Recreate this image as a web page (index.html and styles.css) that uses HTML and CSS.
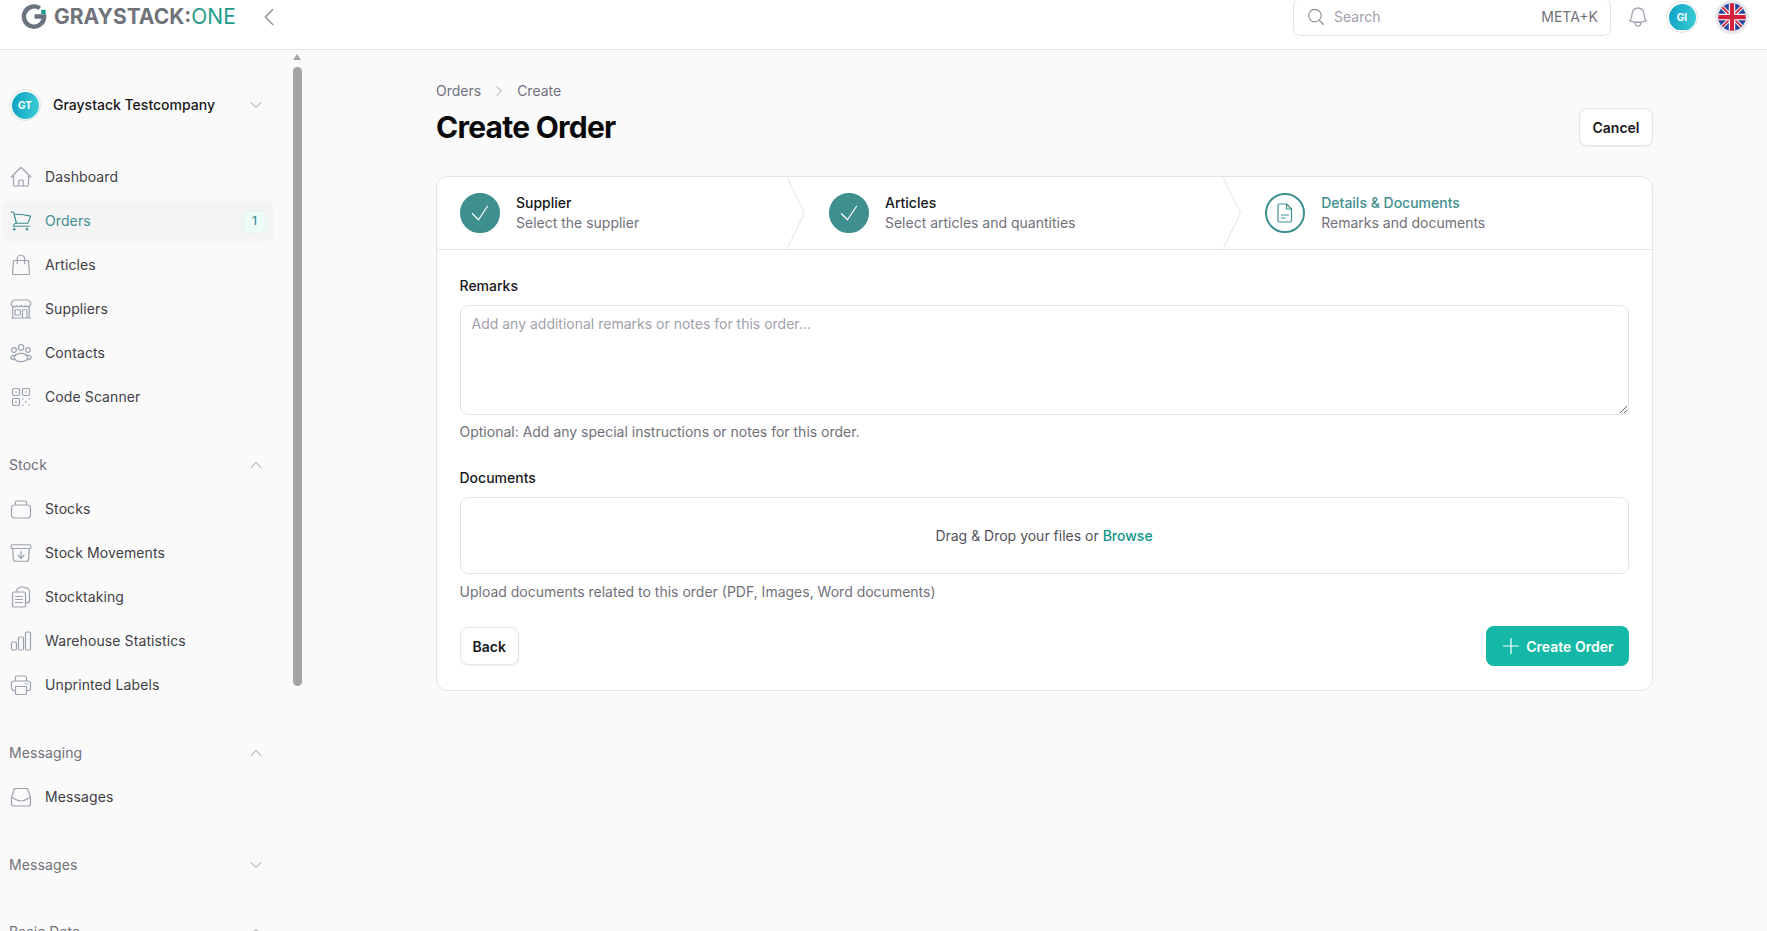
FILE: index.html
```html
<!DOCTYPE html>
<html lang="en">
<head>
    <meta charset="UTF-8">
    <meta name="viewport" content="width=device-width, initial-scale=1.0">
    <title>Create Order</title>
    <link rel="stylesheet" href="styles.css">
</head>
<body>
    <header class="topbar">
        <div class="brand">
            <svg class="brand-mark" viewBox="0 0 28 28"><path d="M19.5 5.400A10.500 10.500 0 1 0 24 14H14" fill="none" stroke="#6b7280" stroke-width="4.6"/><rect x="21" y="7" width="4.500" height="4.500" fill="#1a9c8c" stroke="none"/></svg>
            <span class="brand-name">GRAYSTACK:<span class="brand-one">ONE</span></span>
        </div>
        <svg class="collapse" viewBox="0 0 24 24"><path d="M15.75 19.5 8.25 12l7.5-7.5"/></svg>
        <div class="topbar-right">
            <div class="search">
                <svg viewBox="0 0 24 24"><path d="m21 21-5.2-5.2m0 0A7.5 7.5 0 1 0 5.2 5.2a7.5 7.5 0 0 0 10.6 10.6Z"/></svg>
                <span class="search-text">Search</span>
                <span class="search-key">META+K</span>
            </div>
            <svg class="bell" viewBox="0 0 24 24"><path d="M14.857 17.082a23.848 23.848 0 0 0 5.454-1.31A8.967 8.967 0 0 1 18 9.75V9A6 6 0 0 0 6 9v.75a8.967 8.967 0 0 1-2.312 6.022c1.733.64 3.56 1.085 5.455 1.31m5.714 0a24.255 24.255 0 0 1-5.714 0m5.714 0a3 3 0 1 1-5.714 0"/></svg>
            <span class="avatar">GI</span>
            <span class="flag">
                <svg viewBox="0 0 32 32">
                    <clipPath id="flagClip"><circle cx="16" cy="16" r="13"/></clipPath>
                    <g clip-path="url(#flagClip)" stroke-linecap="butt">
                        <rect width="32" height="32" fill="#24479c" stroke="none"/>
                        <path d="M0 0 32 32M32 0 0 32" stroke="#fff" stroke-width="3.6"/>
                        <path d="M0 0 32 32M32 0 0 32" stroke="#d2213a" stroke-width="1.8"/>
                        <path d="M16 0V32M0 16H32" stroke="#fff" stroke-width="6"/>
                        <path d="M16 0V32M0 16H32" stroke="#d2213a" stroke-width="4"/>
                    </g>
                </svg>
            </span>
        </div>
    </header>

    <div class="layout">
        <aside class="sidebar">
            <nav class="sidebar-nav">
                <div class="company">
                    <span class="avatar">GT</span>
                    <span class="company-name">Graystack Testcompany</span>
                    <svg class="chevron" viewBox="0 0 24 24"><path d="m19.5 8.25-7.5 7.5-7.5-7.5"/></svg>
                </div>

                <ul class="menu">
                    <li class="menu-item">
                        <svg viewBox="0 0 24 24"><path d="m2.25 12 8.954-8.955c.44-.439 1.152-.439 1.591 0L21.75 12M4.5 9.75v10.125c0 .621.504 1.125 1.125 1.125H9.75v-4.875c0-.621.504-1.125 1.125-1.125h2.25c.621 0 1.125.504 1.125 1.125V21h4.125c.621 0 1.125-.504 1.125-1.125V9.75M8.25 21h8.25"/></svg>
                        Dashboard
                    </li>
                    <li class="menu-item active">
                        <svg viewBox="0 0 24 24"><path d="M2.25 3h1.386c.51 0 .955.343 1.087.835l.383 1.437M7.5 14.25a3 3 0 0 0-3 3h15.75m-12.75-3h11.218c1.121-2.3 2.1-4.684 2.924-7.138a60.114 60.114 0 0 0-16.536-1.84M7.5 14.25 5.106 5.272M6 20.25a.75.75 0 1 1-1.5 0 .75.75 0 0 1 1.5 0Zm12.75 0a.75.75 0 1 1-1.5 0 .75.75 0 0 1 1.5 0Z"/></svg>
                        Orders
                        <span class="badge">1</span>
                    </li>
                    <li class="menu-item">
                        <svg viewBox="0 0 24 24"><path d="M4.5 7.5h15l1 13a1 1 0 0 1-1 1h-15a1 1 0 0 1-1-1l1-13ZM8.25 10.5V6a3.75 3.75 0 0 1 7.5 0v4.5"/></svg>
                        Articles
                    </li>
                    <li class="menu-item">
                        <svg viewBox="0 0 24 24"><path d="M13.5 21v-7.5a.75.75 0 0 1 .75-.75h3a.75.75 0 0 1 .75.75V21m-4.5 0H2.36m11.14 0H18m0 0h3.64m-1.39 0V9.349M3.75 21V9.349m0 0a3.001 3.001 0 0 0 3.75-.615A2.993 2.993 0 0 0 9.75 9.75c.896 0 1.7-.393 2.25-1.016a2.993 2.993 0 0 0 2.25 1.016c.896 0 1.7-.393 2.25-1.015a3.001 3.001 0 0 0 3.75.614m-16.5 0a3.004 3.004 0 0 1-.621-4.72l1.189-1.19A1.5 1.5 0 0 1 5.378 3h13.243a1.5 1.5 0 0 1 1.06.44l1.19 1.189a3 3 0 0 1-.621 4.72M6.75 18h3.75a.75.75 0 0 0 .75-.75V13.5a.75.75 0 0 0-.75-.75H6.75a.75.75 0 0 0-.75.75v3.75c0 .414.336.75.75.75Z"/></svg>
                        Suppliers
                    </li>
                    <li class="menu-item">
                        <svg viewBox="0 0 24 24"><circle cx="12" cy="6.5" r="2.8"/><circle cx="5" cy="9" r="2.3"/><circle cx="19" cy="9" r="2.3"/><path d="M7 14.2c-2.8 0-5.2 1-5.2 2.3s1.6 2 3.4 2.2M17 14.2c2.8 0 5.2 1 5.2 2.3s-1.6 2-3.4 2.2"/><ellipse cx="12" cy="16.5" rx="6.8" ry="4.2"/></svg>
                        Contacts
                    </li>
                    <li class="menu-item">
                        <svg viewBox="0 0 24 24"><rect x="3.5" y="3.5" width="7" height="7" rx="1.2"/><rect x="13.5" y="3.5" width="7" height="7" rx="1.2"/><rect x="3.5" y="13.5" width="7" height="7" rx="1.2"/><path d="M6.8 6.9h.4v.3h-.4zM16.8 6.9h.4v.3h-.4zM6.8 16.9h.4v.3h-.4zM13.7 13.7h.3v.3h-.3zM20 13.7h.3v.3H20zM16.8 16.9h.4v.3h-.4zM13.7 20h.3v.3h-.3zM20 20h.3v.3H20z"/></svg>
                        Code Scanner
                    </li>
                </ul>

                <div class="section-title">
                    Stock
                    <svg class="chevron" viewBox="0 0 24 24"><path d="m4.5 15.75 7.5-7.5 7.5 7.5"/></svg>
                </div>
                <ul class="menu">
                    <li class="menu-item">
                        <svg viewBox="0 0 24 24"><path d="M6.5 7V5.2c0-.7.5-1.2 1.2-1.2h8.6c.7 0 1.2.5 1.2 1.2V7M5.5 8h13a3 3 0 0 1 3 3v7a3 3 0 0 1-3 3h-13a3 3 0 0 1-3-3v-7a3 3 0 0 1 3-3Z"/></svg>
                        Stocks
                    </li>
                    <li class="menu-item">
                        <svg viewBox="0 0 24 24"><path d="m20.25 7.5-.625 10.632a2.25 2.25 0 0 1-2.247 2.118H6.622a2.25 2.25 0 0 1-2.247-2.118L3.75 7.5m8.25 3v6.75m0 0-3-3m3 3 3-3M3.375 7.5h17.25c.621 0 1.125-.504 1.125-1.125v-1.5c0-.621-.504-1.125-1.125-1.125H3.375c-.621 0-1.125.504-1.125 1.125v1.5c0 .621.504 1.125 1.125 1.125Z"/></svg>
                        Stock Movements
                    </li>
                    <li class="menu-item">
                        <svg viewBox="0 0 24 24"><rect x="3.5" y="7" width="13" height="15" rx="1.5"/><path d="M8 7V4.500A1.500 1.500 0 0 1 9.500 3h.7A1.800 1.800 0 0 1 12 2h2a1.800 1.800 0 0 1 1.800 1h.7A3.500 3.500 0 0 1 20.500 6.500v9.200a2 2 0 0 1-2 2h-2M6.500 11.500h7M6.500 14.500h7M6.500 17.500h7"/></svg>
                        Stocktaking
                    </li>
                    <li class="menu-item">
                        <svg viewBox="0 0 24 24"><rect x="2.5" y="13" width="5" height="8" rx="1.2"/><rect x="9.5" y="8" width="5" height="13" rx="1.2"/><rect x="16.5" y="3" width="5" height="18" rx="1.2"/></svg>
                        Warehouse Statistics
                    </li>
                    <li class="menu-item">
                        <svg viewBox="0 0 24 24"><path d="M6.500 8V4.500A1.500 1.500 0 0 1 8 3h8a1.500 1.500 0 0 1 1.500 1.500V8M6.500 17.500H5A2.500 2.500 0 0 1 2.500 15v-4.500A2.500 2.500 0 0 1 5 8h14a2.500 2.500 0 0 1 2.500 2.500V15a2.500 2.500 0 0 1-2.500 2.500h-1.500M6.500 13.500h11v7a1 1 0 0 1-1 1h-9a1 1 0 0 1-1-1v-7ZM16 10.800h.8M18.500 10.800h.5"/></svg>
                        Unprinted Labels
                    </li>
                </ul>

                <div class="section-title">
                    Messaging
                    <svg class="chevron" viewBox="0 0 24 24"><path d="m4.500 15.750 7.500-7.500 7.500 7.500"/></svg>
                </div>
                <ul class="menu">
                    <li class="menu-item">
                        <svg viewBox="0 0 24 24"><path d="M5.500 3.500h13l3 9V19a2 2 0 0 1-2 2h-15a2 2 0 0 1-2-2v-6.500l3-9ZM2.500 12.500c3 0 3.500 3.500 9.500 3.500s6.500-3.500 9.500-3.500"/></svg>
                        Messages
                    </li>
                </ul>

                <div class="section-title">
                    Messages
                    <svg class="chevron" viewBox="0 0 24 24"><path d="m19.500 8.250-7.500 7.500-7.500-7.500"/></svg>
                </div>
                <div class="section-title">
                    Basic Data
                    <svg class="chevron" viewBox="0 0 24 24"><path d="m4.500 15.750 7.500-7.500 7.500 7.500"/></svg>
                </div>
            </nav>
            <div class="scrollbar">
                <span class="scroll-arrow"></span>
                <span class="scroll-thumb"></span>
            </div>
        </aside>

        <main class="content">
            <div class="breadcrumb">
                <span>Orders</span>
                <svg viewBox="0 0 24 24"><path d="m8.250 4.500 7.500 7.500-7.500 7.500"/></svg>
                <span>Create</span>
            </div>
            <div class="page-head">
                <h1>Create Order</h1>
                <button class="btn" type="button">Cancel</button>
            </div>

            <section class="card">
                <div class="steps">
                    <div class="step">
                        <span class="step-icon done">
                            <svg viewBox="0 0 24 24"><path d="m4.500 12.750 6 6 9-13.500"/></svg>
                        </span>
                        <div class="step-text">
                            <strong>Supplier</strong>
                            <span>Select the supplier</span>
                        </div>
                        <svg class="step-arrow" viewBox="0 0 18 74" preserveAspectRatio="none"><path d="M0 0 17.500 37 0 74"/></svg>
                    </div>
                    <div class="step">
                        <span class="step-icon done">
                            <svg viewBox="0 0 24 24"><path d="m4.500 12.750 6 6 9-13.500"/></svg>
                        </span>
                        <div class="step-text">
                            <strong>Articles</strong>
                            <span>Select articles and quantities</span>
                        </div>
                        <svg class="step-arrow" viewBox="0 0 18 74" preserveAspectRatio="none"><path d="M0 0 17.500 37 0 74"/></svg>
                    </div>
                    <div class="step current">
                        <span class="step-icon">
                            <svg viewBox="0 0 24 24"><path d="M6.500 3h7l5 5v11.500a1.500 1.500 0 0 1-1.500 1.500H6.500A1.500 1.500 0 0 1 5 19.500v-15A1.500 1.500 0 0 1 6.500 3ZM13.500 3v5h5M8.500 14h7M8.500 17h3.500"/></svg>
                        </span>
                        <div class="step-text">
                            <strong>Details &amp; Documents</strong>
                            <span>Remarks and documents</span>
                        </div>
                    </div>
                </div>

                <form class="order-form">
                    <div class="field">
                        <label for="remarks">Remarks</label>
                        <textarea id="remarks" placeholder="Add any additional remarks or notes for this order..."></textarea>
                        <p class="hint">Optional: Add any special instructions or notes for this order.</p>
                    </div>
                    <div class="field">
                        <label>Documents</label>
                        <div class="dropzone">Drag &amp; Drop your files or&nbsp;<a class="browse">Browse</a></div>
                        <p class="hint">Upload documents related to this order (PDF, Images, Word documents)</p>
                    </div>
                    <div class="form-actions">
                        <button class="btn" type="button">Back</button>
                        <button class="btn btn-primary" type="submit">
                            <svg viewBox="0 0 24 24"><path d="M12 4.500v15m7.500-7.500h-15"/></svg>
                            Create Order
                        </button>
                    </div>
                </form>
            </section>
        </main>
    </div>
</body>
</html>
```

FILE: styles.css
```css
* {
    box-sizing: border-box;
}
body {
    font-family: Inter, "Liberation Sans", sans-serif;
    font-size: 14px;
    line-height: 20px;
    background-color: #fafafa;
    color: #18181b;
    margin: 0;
    height: 100vh;
    overflow: hidden;
    display: flex;
    flex-direction: column;
}
svg {
    fill: none;
    stroke: currentColor;
    stroke-width: 1.3;
    stroke-linecap: round;
    stroke-linejoin: round;
    flex-shrink: 0;
}

/* top bar */
.topbar {
    height: 50px;
    flex-shrink: 0;
    background: #fff;
    border-bottom: 1px solid #e4e4e7;
    padding: 0 18px 16px 21px;
    display: flex;
    align-items: center;
}
.brand {
    display: flex;
    align-items: center;
    gap: 6px;
}
.brand-mark {
    width: 27px;
    height: 27px;
    stroke-linecap: butt;
    stroke-linejoin: miter;
}
.brand-name {
    font-size: 21px;
    font-weight: 700;
    color: #71737a;
}
.brand-one {
    font-weight: 400;
    color: #1f9d8b;
}
.collapse {
    width: 24px;
    height: 24px;
    margin-left: 21px;
    color: #8b8b93;
}
.topbar-right {
    margin-left: auto;
    display: flex;
    align-items: center;
}
.search {
    width: 318px;
    height: 38px;
    border: 1px solid #e4e4e7;
    border-radius: 8px;
    padding: 0 12px;
    display: flex;
    align-items: center;
    gap: 8px;
    background: #fff;
}
.search svg {
    width: 20px;
    height: 20px;
    color: #8b8b93;
}
.search-text {
    color: #a1a1aa;
}
.search-key {
    margin-left: auto;
    color: #71717a;
}
.bell {
    width: 24px;
    height: 24px;
    margin-left: 15px;
    color: #9ca3af;
}
.topbar-right .avatar {
    margin-left: 16px;
}
.flag {
    width: 34px;
    height: 34px;
    margin-left: 17px;
    border-radius: 50%;
    background: #e8e8ec;
    display: block;
}
.flag svg {
    width: 34px;
    height: 34px;
    display: block;
}
.avatar {
    width: 32px;
    height: 32px;
    padding: 1.5px;
    border-radius: 50%;
    flex-shrink: 0;
    background: linear-gradient(100deg, #0d9fc4, #3ccfd6) content-box;
    border: 1.5px solid #dde2e5;
    color: #fff;
    font-size: 10px;
    font-weight: 700;
    display: flex;
    align-items: center;
    justify-content: center;
}

/* sidebar */
.layout {
    flex: 1;
    min-height: 0;
    display: flex;
}
.sidebar {
    width: 310px;
    flex-shrink: 0;
    display: flex;
    overflow: hidden;
}
.sidebar-nav {
    width: 292px;
    padding-right: 18px;
    flex-shrink: 0;
}
.company {
    height: 34px;
    margin: 38px 0 35px 9px;
    display: flex;
    align-items: center;
    gap: 12px;
    font-weight: 500;
    color: #18181b;
}
.chevron {
    width: 16px;
    height: 16px;
    margin-left: auto;
    margin-right: 10px;
    color: #8b8b93;
}
.menu {
    list-style: none;
    margin: 0;
    padding: 0;
}
.menu-item {
    height: 40px;
    margin: 0 0 4px 2px;
    padding: 0 8px 0 7px;
    border-radius: 8px;
    display: flex;
    align-items: center;
    gap: 12px;
    letter-spacing: 0.1px;
    color: #3f3f46;
}
.menu-item svg {
    width: 24px;
    height: 24px;
    color: #9ca3af;
    stroke-width: 1.2;
}
.menu-item.active {
    background: #f4f4f5;
    color: #3f8f8f;
}
.menu-item.active svg {
    color: #3f8f8f;
}
.badge {
    margin-left: auto;
    width: 23px;
    height: 23px;
    border-radius: 6px;
    background: #eefcf9;
    border: 1px solid #e3f3f0;
    color: #3f8f8f;
    font-size: 12px;
    font-weight: 500;
    display: flex;
    align-items: center;
    justify-content: center;
}
.section-title {
    height: 24px;
    margin: 36px 0 12px 9px;
    display: flex;
    align-items: center;
    letter-spacing: 0.1px;
    color: #71717a;
}
.section-title + .section-title {
    margin-top: 43px;
}
.scrollbar {
    width: 10px;
    height: 640px;
    padding-top: 3px;
    display: flex;
    flex-direction: column;
    align-items: center;
}
.scroll-arrow {
    border: 4px solid transparent;
    border-top: 0;
    border-bottom: 6px solid #a3a3a3;
    margin-top: 1px;
}
.scroll-thumb {
    width: 9px;
    height: 619px;
    margin-top: 7px;
    border-radius: 5px;
    background: #a3a3a3;
}

/* main */
.content {
    flex: 1;
    min-width: 0;
    padding: 31px 114px 0 126px;
}
.breadcrumb {
    display: flex;
    align-items: center;
    gap: 11px;
    color: #71717a;
}
.breadcrumb svg {
    width: 14px;
    height: 14px;
    color: #8b8b93;
}
.page-head {
    margin-top: 7px;
    display: flex;
    align-items: center;
    justify-content: space-between;
}
.page-head .btn {
    padding: 0 12.5px;
}
h1 {
    margin: 0;
    font-size: 30px;
    line-height: 36px;
    font-weight: 700;
    letter-spacing: -0.75px;
    color: #09090b;
}
.btn {
    height: 38px;
    padding: 0 12px;
    border: 1px solid #e4e4e7;
    border-radius: 8px;
    background: #fff;
    box-shadow: 0 1px 2px rgba(0, 0, 0, 0.05);
    font-family: inherit;
    font-size: 14px;
    font-weight: 600;
    color: #18181b;
}
.btn-primary {
    height: 40px;
    padding: 0 15px 0 13px;
    border: none;
    background: #14b8a6;
    color: #fff;
    box-shadow: none;
    display: flex;
    align-items: center;
    gap: 3px;
}
.btn-primary svg {
    width: 24px;
    height: 24px;
    stroke-width: 1.2;
}
.card {
    margin-top: 30px;
    background: #fff;
    border: 1px solid #e4e4e7;
    border-radius: 12px;
}
.steps {
    height: 73px;
    border-bottom: 1px solid #e4e4e7;
    display: flex;
}
.step {
    position: relative;
    flex: 1 1 auto;
    padding-left: 23px;
    display: flex;
    align-items: center;
    gap: 16px;
}
.step-icon {
    width: 40px;
    height: 40px;
    border-radius: 50%;
    border: 2px solid #3f8f8f;
    color: #3f8f8f;
    display: flex;
    align-items: center;
    justify-content: center;
}
.step-icon svg {
    width: 24px;
    height: 24px;
    stroke-width: 1.2;
}
.step-icon.done {
    background: #3f8f8f;
    color: #fff;
}
.step-text {
    display: flex;
    flex-direction: column;
}
.step-text strong {
    font-weight: 500;
    color: #18181b;
}
.step-text span {
    color: #71717a;
}
.step.current strong {
    color: #3f8f8f;
}
.step-arrow {
    position: absolute;
    right: 1px;
    top: 0;
    width: 18px;
    height: 72px;
    color: #e4e4e7;
    stroke-width: 1;
}
.order-form {
    padding: 26px 23.5px 24px 22.5px;
}
.field + .field {
    margin-top: 26px;
}
label {
    display: block;
    margin-bottom: 9px;
    font-weight: 500;
    color: #18181b;
}
textarea {
    display: block;
    width: 100%;
    height: 110px;
    padding: 8px 11px;
    border: 1px solid #e4e4e7;
    border-radius: 8px;
    outline: none;
    font-family: inherit;
    font-size: 14px;
    line-height: 20px;
    color: #18181b;
}
textarea::placeholder {
    color: #a1a1aa;
    opacity: 1;
}
.hint {
    margin: 7px 0 0;
    color: #71717a;
}
.dropzone {
    height: 77px;
    border: 1px solid #e4e4e7;
    border-radius: 8px;
    display: flex;
    align-items: center;
    justify-content: center;
    color: #52525b;
}
.dropzone + .hint {
    margin-top: 8px;
}
.browse {
    font-weight: 500;
    color: #0f9688;
}
.form-actions {
    display: flex;
    justify-content: space-between;
    align-items: center;
    margin-top: 24px;
}
```
